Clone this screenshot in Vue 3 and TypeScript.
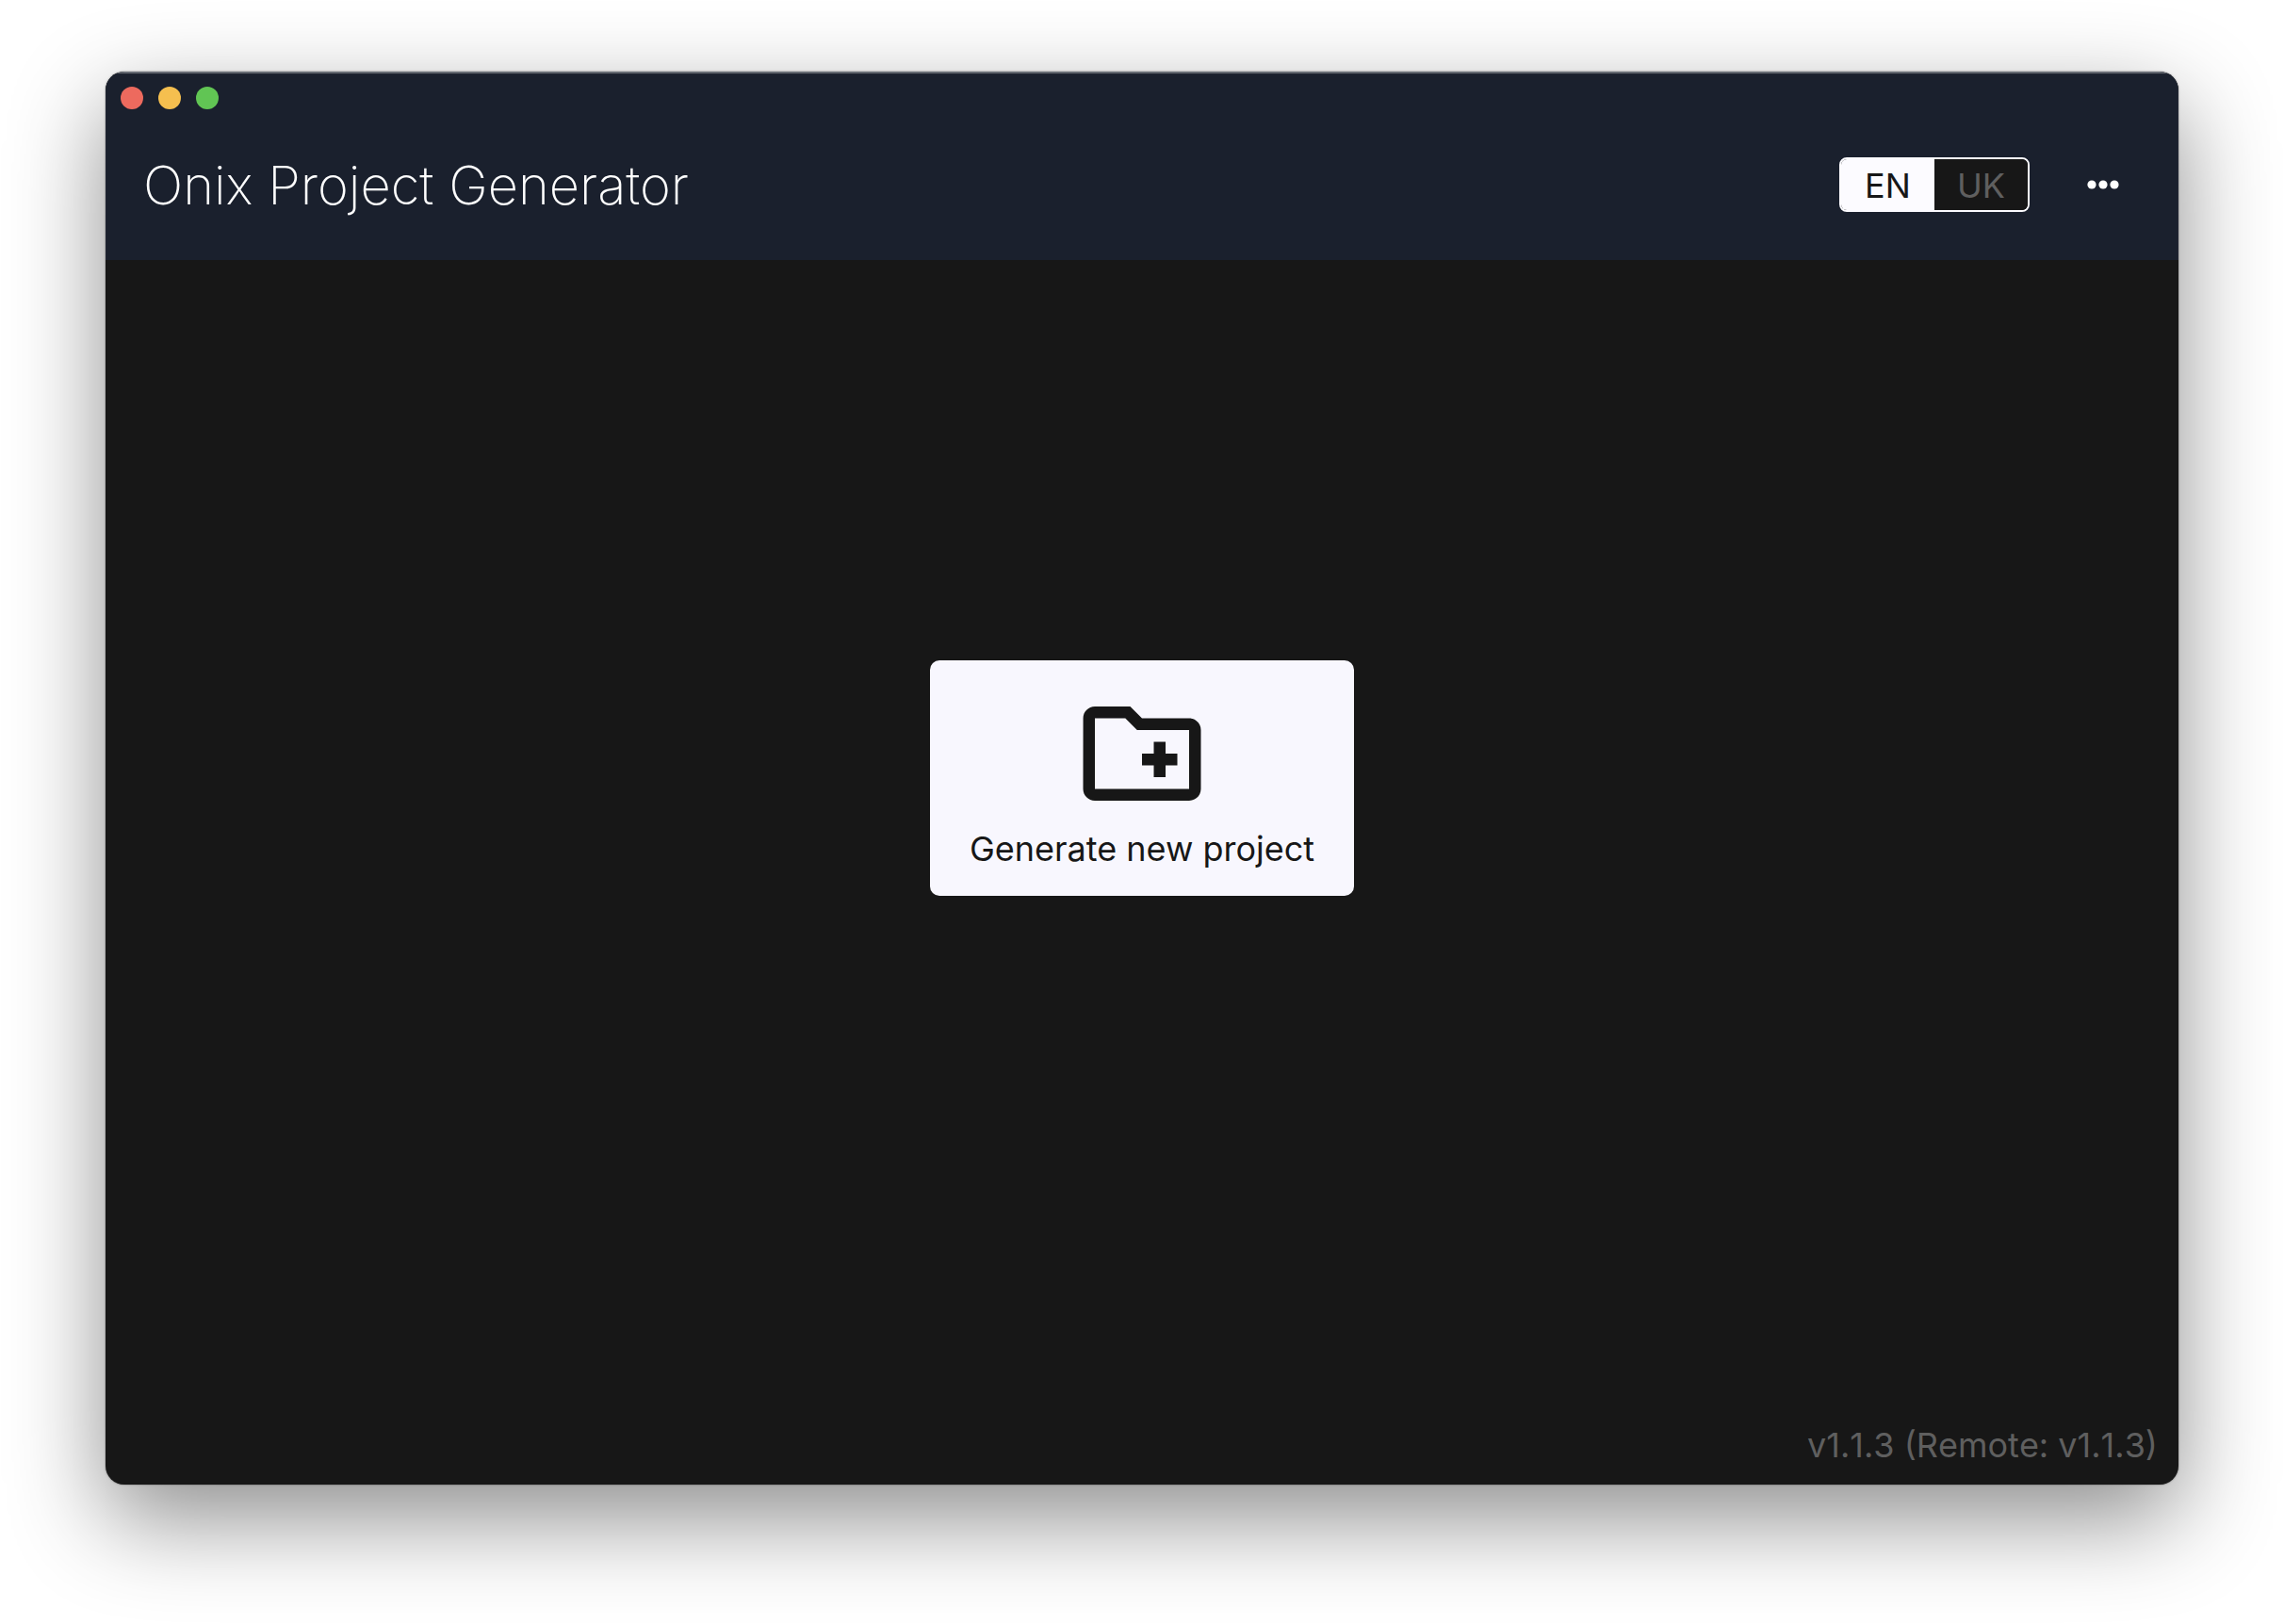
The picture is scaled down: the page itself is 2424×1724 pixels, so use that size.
<script setup lang="ts">
import { ref } from 'vue'

interface Language {
  code: string
  label: string
}

const languages: Language[] = [
  { code: 'en', label: 'EN' },
  { code: 'uk', label: 'UK' },
]
const current = ref<string>('en')
const localVersion = 'v1.1.3'
const remoteVersion = 'v1.1.3'
</script>

<template>
  <div class="desktop">
    <div class="window">
      <header class="header">
        <div class="lights">
          <button class="light close" type="button" aria-label="Close"></button>
          <button class="light minimize" type="button" aria-label="Minimize"></button>
          <button class="light maximize" type="button" aria-label="Maximize"></button>
        </div>
        <div class="bar">
          <h1 class="title">Onix Project Generator</h1>
          <div class="actions">
            <div class="toggle" role="group" aria-label="Language">
              <button
                v-for="language in languages"
                :key="language.code"
                type="button"
                class="option"
                :class="{ active: language.code === current }"
                :aria-pressed="language.code === current"
                @click="current = language.code"
              >{{ language.label }}</button>
            </div>
            <button class="menu" type="button" aria-label="More">
              <svg viewBox="0 0 36 12" width="36" height="12" fill="currentColor" aria-hidden="true">
                <circle cx="6" cy="6" r="4.6" />
                <circle cx="18" cy="6" r="4.6" />
                <circle cx="30" cy="6" r="4.6" />
              </svg>
            </button>
          </div>
        </div>
      </header>

      <main class="content">
        <button class="card" type="button">
          <svg class="folder" viewBox="0 0 24 24" fill="currentColor" aria-hidden="true">
            <path d="M20 6h-8l-2-2H4c-1.11 0-1.99.89-1.99 2L2 18c0 1.11.89 2 2 2h16c1.11 0 2-.89 2-2V8c0-1.11-.89-2-2-2zm0 12H4V6h5.17l2 2H20v10zm-8-4h2v2h2v-2h2v-2h-2v-2h-2v2h-2v2z" />
          </svg>
          <span>Generate new project</span>
        </button>
      </main>

      <footer class="footer">{{ localVersion }} (Remote: {{ remoteVersion }})</footer>
    </div>
  </div>
</template>

<style>
body {
  background: #fff;
}
</style>

<style scoped>
.desktop {
  box-sizing: border-box;
  display: flex;
  min-height: 100vh;
  padding: 76px 112px 148px;
  font-family: Inter, "Liberation Sans", sans-serif;
  font-size: 36px;
  line-height: 44px;
}

button {
  margin: 0;
  padding: 0;
  border: 0;
  font: inherit;
  cursor: pointer;
}

.window {
  flex: 1;
  display: grid;
  grid-template-rows: 200px 1fr 200px;
  overflow: hidden;
  border-radius: 20px;
  background: #171717;
  box-shadow: 0 0 2px rgba(0, 0, 0, 0.5), 0 36px 100px rgba(0, 0, 0, 0.45);
}

.header {
  display: flex;
  flex-direction: column;
  background: #1a202d;
  box-shadow: inset 0 2px 1px rgba(255, 255, 255, 0.35);
}

.lights {
  display: flex;
  gap: 16px;
  padding: 16px 16px 0;
}

.light {
  width: 24px;
  height: 24px;
  border-radius: 50%;
}

.close {
  background: #ed6a5e;
}

.minimize {
  background: #f5bf4f;
}

.maximize {
  background: #61c554;
}

.bar {
  flex: 1;
  display: flex;
  align-items: center;
  justify-content: space-between;
  padding: 0 62px 0 40px;
}

.title {
  margin: 0;
  padding-top: 2px;
  color: #fff;
  font-size: 56px;
  font-weight: 200;
  line-height: 68px;
}

.actions {
  display: flex;
  align-items: center;
  gap: 60px;
}

.toggle {
  display: flex;
  overflow: hidden;
  border: 2px solid #fcfbff;
  border-radius: 8px;
  background: #171717;
}

.option {
  width: 99px;
  height: 54px;
  padding-top: 2px;
  background: #171717;
  color: #5f5f5f;
}

.option.active {
  background: #fcfbff;
  color: #171717;
}

.menu {
  display: flex;
  background: none;
  color: #fff;
}

.content {
  display: flex;
  align-items: center;
  justify-content: center;
}

.card {
  display: flex;
  flex-direction: column;
  align-items: center;
  gap: 4px;
  padding: 24px 42px 28px;
  border-radius: 10px;
  background: #f8f7fe;
  color: #171717;
}

.folder {
  width: 150px;
  height: 150px;
}

.footer {
  display: flex;
  align-items: flex-end;
  justify-content: flex-end;
  padding: 0 22px 20px;
  color: #5f5f5f;
  font-kerning: none;
}
</style>
